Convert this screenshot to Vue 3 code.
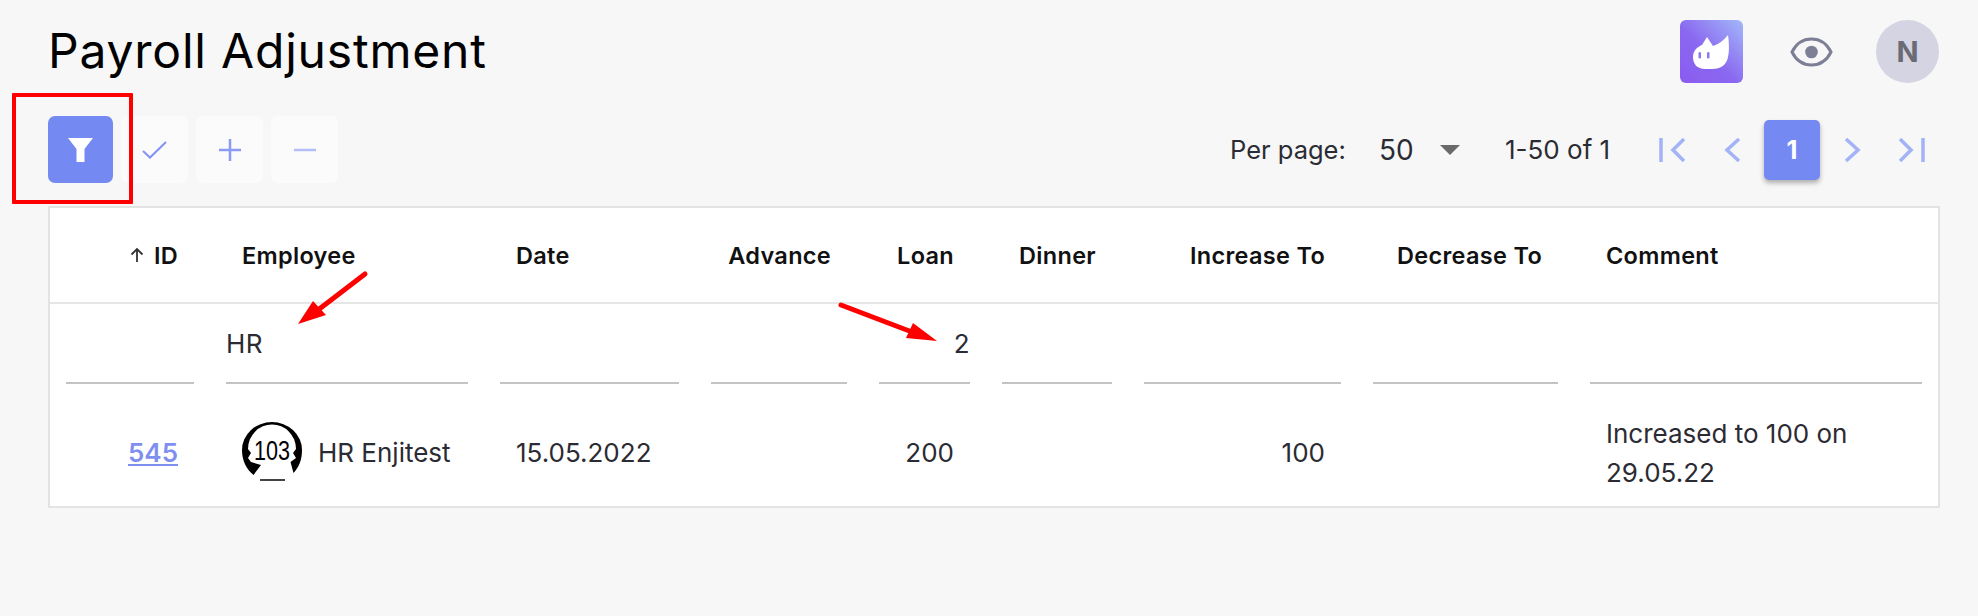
<template>
  <div class="page">
    <header class="topbar">
      <h1 class="title">Payroll Adjustment</h1>
      <div class="top-actions">
        <div class="logo">
          <svg viewBox="0 0 63 63" width="63" height="63">
            <defs>
              <linearGradient id="logoGrad" x1="0" y1="1" x2="1" y2="0">
                <stop offset="0" stop-color="#8a5bf0" />
                <stop offset="0.45" stop-color="#8a68f0" />
                <stop offset="1" stop-color="#a3b8f9" />
              </linearGradient>
            </defs>
            <rect width="63" height="63" rx="6" fill="url(#logoGrad)" />
            <path
              d="M13 37C13 31 17 27 22 25L27 17L33 26C39 24 44 20 48 15C49 22 49.500 31 48 37C46.500 45 41 49 32 49L25 49C17 49 13 44 13 37Z"
              fill="#fff"
            />
            <rect x="18.500" y="32" width="2.500" height="6.500" rx="1.250" fill="#8f78ee" />
            <rect x="27" y="32" width="2.500" height="6.500" rx="1.250" fill="#8f78ee" />
          </svg>
        </div>
        <svg class="eye" viewBox="0 0 43 30" width="43" height="30">
          <path
            d="M2 15C6 7 13 2 21.500 2C30 2 37 7 41 15C37 23 30 28 21.500 28C13 28 6 23 2 15Z"
            fill="none"
            stroke="#7c7f96"
            stroke-width="3"
          />
          <circle cx="21.500" cy="15" r="6.300" fill="#7c7f96" />
        </svg>
        <div class="avatar">N</div>
      </div>
    </header>

    <div class="toolbar">
      <div class="tools">
        <button type="button" class="tool tool-active" aria-label="Filter">
          <svg viewBox="0 0 25 24" width="25" height="24">
            <path d="M0 0H25L16.500 11V24H8.500V11Z" fill="#fff" />
          </svg>
        </button>
        <button type="button" class="tool" aria-label="Approve">
          <svg viewBox="0 0 25 18" width="25" height="18">
            <path d="M1 10L8 16.500L24 1" fill="none" stroke="#8492f3" stroke-width="2" />
          </svg>
        </button>
        <button type="button" class="tool" aria-label="Add">
          <svg viewBox="0 0 22 22" width="22" height="22">
            <path d="M11 0V22M0 11H22" fill="none" stroke="#8b9af4" stroke-width="2.500" />
          </svg>
        </button>
        <button type="button" class="tool" aria-label="Remove">
          <svg viewBox="0 0 22 4" width="22" height="4">
            <path d="M0 2H22" fill="none" stroke="#b3bef7" stroke-width="2.500" />
          </svg>
        </button>
      </div>

      <div class="pager">
        <span class="per-page">Per page:</span>
        <span class="per-value">50</span>
        <span class="caret"></span>
        <span class="range">1-50 of 1</span>
        <div class="pager-nav">
          <button type="button" class="nav" aria-label="First page">
            <svg viewBox="0 0 26 24" width="26" height="24">
              <path d="M2 0V24M25 1L14 12L25 23" fill="none" stroke="#a3b3f8" stroke-width="3.500" />
            </svg>
          </button>
          <button type="button" class="nav" aria-label="Previous page">
            <svg viewBox="0 0 17 24" width="17" height="24">
              <path d="M15 1L3 12L15 23" fill="none" stroke="#a3b3f8" stroke-width="3.500" />
            </svg>
          </button>
          <button type="button" class="nav nav-current">1</button>
          <button type="button" class="nav" aria-label="Next page">
            <svg viewBox="0 0 17 24" width="17" height="24">
              <path d="M2 1L14 12L2 23" fill="none" stroke="#a3b3f8" stroke-width="3.500" />
            </svg>
          </button>
          <button type="button" class="nav" aria-label="Last page">
            <svg viewBox="0 0 26 24" width="26" height="24">
              <path d="M24 0V24M1 1L12 12L1 23" fill="none" stroke="#a3b3f8" stroke-width="3.500" />
            </svg>
          </button>
        </div>
      </div>
    </div>

    <section class="table">
      <div class="row row-head">
        <div
          v-for="col in columns"
          :key="col.label"
          class="cell"
          :class="{ right: col.right }"
        >
          <span v-if="col.sort" class="sort-arrow">
            <svg viewBox="0 0 16 16" width="16" height="16">
              <path d="M8 15V2M2.500 7.500L8 2L13.500 7.500" fill="none" stroke="#333" stroke-width="1.800" />
            </svg>
          </span>
          {{ col.label }}
        </div>
      </div>

      <div class="row row-filter">
        <div v-for="col in columns" :key="col.label" class="filter-cell">
          <div class="filter-input" :class="{ right: col.right }">{{ col.filter }}</div>
        </div>
      </div>

      <div class="row row-data">
        <div class="cell right"><a class="id-link" href="#">545</a></div>
        <div class="cell employee">
          <svg class="emp-photo" viewBox="0 0 60 60" width="60" height="60">
            <path
              d="M11.500 53C4 47 0 38 0 28A30 28 0 0 1 60 28C60 38 57 45 51.500 51L48.500 40L54 36L51 31L54 27A24 24.500 0 0 0 6 27L9 31L6 36L9 40L19 43Z"
              fill="#000"
            />
            <path d="M18 58H43" stroke="#444" stroke-width="2" />
            <text x="30" y="38" text-anchor="middle" textLength="36" lengthAdjust="spacingAndGlyphs" class="emp-number">103</text>
          </svg>
          <span>HR Enjitest</span>
        </div>
        <div class="cell">15.05.2022</div>
        <div class="cell right"></div>
        <div class="cell right">200</div>
        <div class="cell right"></div>
        <div class="cell right">100</div>
        <div class="cell right"></div>
        <div class="cell comment">Increased to 100 on 29.05.22</div>
      </div>
    </section>

    <!-- annotations on top of the screenshot -->
    <div class="mark-box"></div>
    <svg class="mark-arrows" viewBox="0 0 1978 616" width="1978" height="616">
      <path d="M365 274L318 310" stroke="#f00" stroke-width="5" stroke-linecap="round" />
      <path d="M298 324L313 301L326 315Z" fill="#f00" />
      <path d="M841 305L912 332" stroke="#f00" stroke-width="5" stroke-linecap="round" />
      <path d="M937 341L913 323L906 338Z" fill="#f00" />
    </svg>
  </div>
</template>

<script setup>
const columns = [
  { label: 'ID', right: true, sort: true, filter: '' },
  { label: 'Employee', filter: 'HR' },
  { label: 'Date', filter: '' },
  { label: 'Advance', right: true, filter: '' },
  { label: 'Loan', right: true, filter: '2' },
  { label: 'Dinner', right: true, filter: '' },
  { label: 'Increase To', right: true, filter: '' },
  { label: 'Decrease To', right: true, filter: '' },
  { label: 'Comment', filter: '' },
]
</script>

<style>
html,
body {
  margin: 0;
  background: #f7f7f7;
}
</style>

<style scoped>
.page {
  position: relative;
  width: 1978px;
  height: 616px;
  box-sizing: border-box;
  padding: 20px 38px 0 48px;
  background: #f7f7f7;
  color: #2b2b33;
  font-family: Inter, 'Liberation Sans', sans-serif;
  overflow: hidden;
}

.topbar {
  display: flex;
  align-items: center;
  justify-content: space-between;
  height: 63px;
}

.title {
  margin: 0 0 2px;
  font-size: 48px;
  font-weight: 400;
  line-height: 60px;
  color: #000;
  letter-spacing: 0.8px;
}

.top-actions {
  display: flex;
  align-items: center;
  gap: 43px;
  margin-right: 1px;
}

.logo {
  width: 63px;
  height: 63px;
  margin-right: 4px;
}

.logo svg,
.eye {
  display: block;
}

.avatar {
  display: flex;
  align-items: center;
  justify-content: center;
  width: 63px;
  height: 63px;
  border-radius: 50%;
  background: #d4d4e2;
  color: #6b6b75;
  font-size: 29px;
  font-weight: 700;
}

.toolbar {
  display: flex;
  align-items: center;
  justify-content: space-between;
  height: 67px;
  margin: 33px 0 23px;
}

.tools {
  display: flex;
  gap: 8px;
}

.tool {
  display: flex;
  align-items: center;
  justify-content: center;
  width: 67px;
  height: 67px;
  padding: 0;
  border: 0;
  border-radius: 7px;
  background: #fbfbfb;
}

.tool-active {
  width: 65px;
  background: #7489f2;
}

.pager {
  display: flex;
  align-items: center;
  font-size: 25.500px;
  color: #2b2b33;
}

.per-page {
  width: 149px;
}

.per-value {
  width: 61px;
  font-size: 28px;
}

.caret {
  width: 0;
  height: 0;
  margin-right: 45px;
  border-left: 10px solid transparent;
  border-right: 10px solid transparent;
  border-top: 10px solid #6a6a6a;
}

.range {
  width: 139px;
  font-size: 26px;
}

.pager-nav {
  display: flex;
  gap: 4px;
}

.nav {
  display: flex;
  align-items: center;
  justify-content: center;
  width: 56px;
  height: 60px;
  padding: 0;
  border: 0;
  background: transparent;
  font: inherit;
}

.nav-current {
  border-radius: 5px;
  background: #7489f2;
  color: #fff;
  font-weight: 700;
  box-shadow: 0 3px 5px rgba(0, 0, 0, 0.3);
}

.table {
  width: 1892px;
  height: 302px;
  box-sizing: border-box;
  border: 2px solid #e3e3e3;
  background: #fff;
}

.row {
  display: grid;
  grid-template-columns: 160px 274px 211px 168px 123px 142px 229px 217px 1fr;
}

.row-head {
  height: 96px;
  box-sizing: border-box;
  border-bottom: 2px solid #e6e6e6;
  font-size: 23.500px;
  font-weight: 600;
  letter-spacing: 0.3px;
  color: #111;
}

.row-filter {
  height: 80px;
}

.row-data {
  height: 122px;
  padding-top: 14px;
  box-sizing: border-box;
  font-size: 26px;
}

.cell {
  display: flex;
  align-items: center;
  padding: 0 32px;
}

.cell.right {
  justify-content: flex-end;
}

.sort-arrow {
  display: flex;
  margin-right: 9px;
}

.filter-cell {
  display: flex;
  padding: 0 16px;
}

.filter-input {
  flex: 1;
  height: 80px;
  box-sizing: border-box;
  padding-top: 22px;
  border-bottom: 2px solid #c4c4c4;
  font-size: 26px;
  letter-spacing: 0.5px;
  line-height: 36px;
}

.filter-input.right {
  text-align: right;
}

.id-link {
  color: #7f8ff0;
  font-weight: 600;
}

.employee {
  gap: 16px;
  padding-right: 0;
}

.emp-photo {
  flex: none;
}

.emp-number {
  font-family: 'Liberation Sans', sans-serif;
  font-size: 28px;
  fill: #000;
}

.comment {
  padding-top: 2px;
  padding-right: 60px;
  line-height: 39px;
}

.mark-box {
  position: absolute;
  left: 12px;
  top: 93px;
  width: 121px;
  height: 111px;
  box-sizing: border-box;
  border: 4.500px solid #f00;
  border-radius: 1px;
}

.mark-arrows {
  position: absolute;
  left: 0;
  top: 0;
  pointer-events: none;
}
</style>
